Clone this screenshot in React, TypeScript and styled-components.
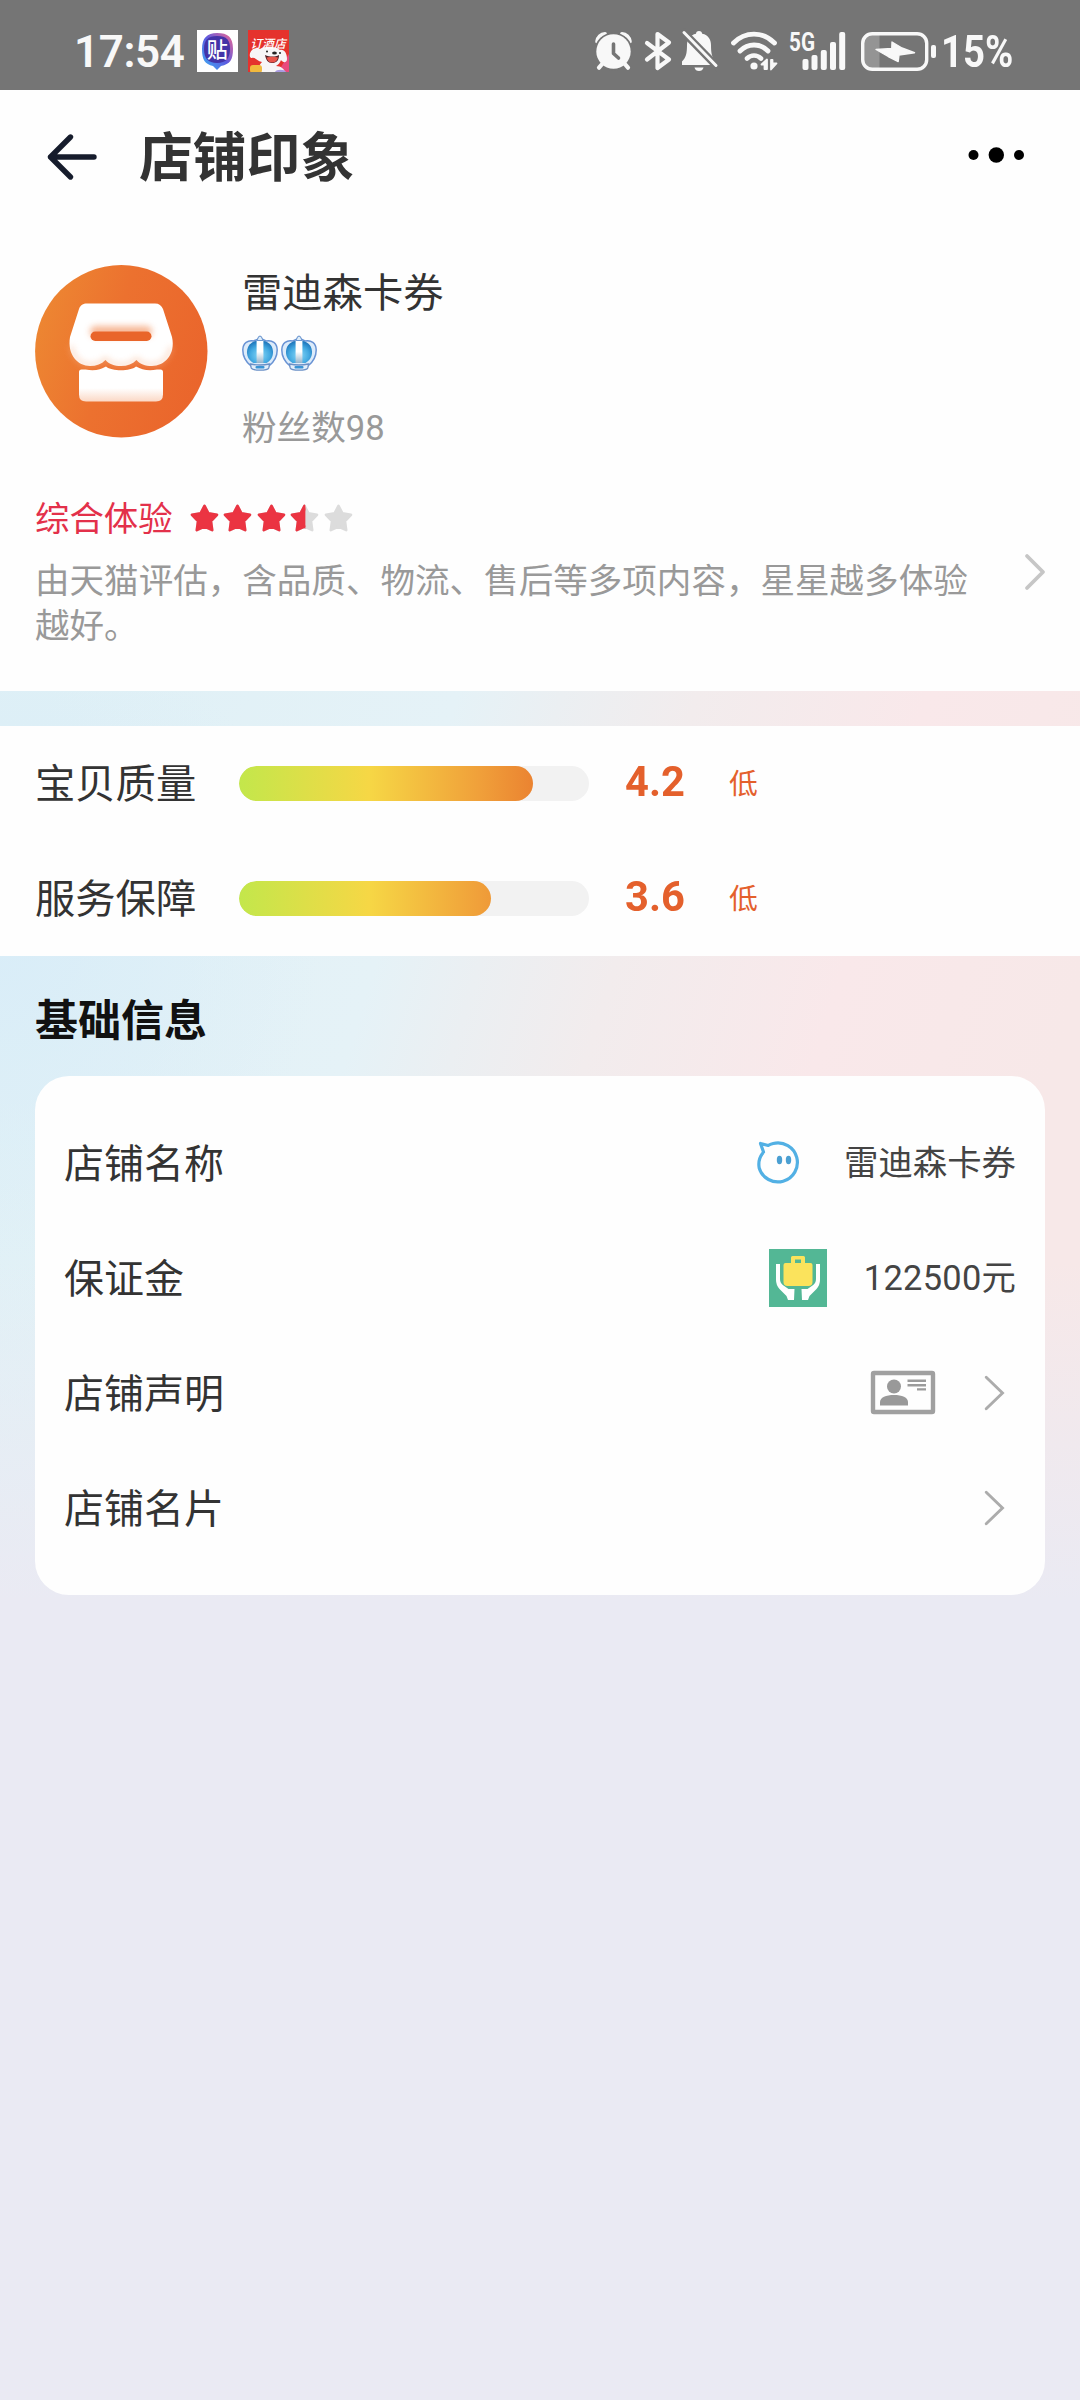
import React from "react";
import styled, { createGlobalStyle } from "styled-components";

const GlobalStyle = createGlobalStyle`
  * { box-sizing: border-box; }
  body {
    margin: 0;
    background: #e9e9f3;
    font-family: Roboto, "Noto Sans CJK SC", sans-serif;
    color: #333;
  }
  svg { display: block; flex: none; overflow: visible; }
`;

const Page = styled.div`
  width: 1080px;
  min-height: 2400px;
  display: flex;
  flex-direction: column;
  overflow: hidden;
  background:
    linear-gradient(180deg, rgba(234, 234, 243, 0) 1260px, #eaeaf3 1600px),
    radial-gradient(320px 320px at 0 940px, #d9edf8 0%, rgba(217, 237, 248, 0) 100%),
    linear-gradient(107deg, #dff0f6 250px, #e5f2f7 640px, #ebeff2 740px, #f2eced 870px, #f9e8ea 1090px, #f7e8e8 1320px);
`;

/* ---------- status bar ---------- */

const StatusBar = styled.div`
  height: 90px;
  padding: 12px 66px 0 74px;
  display: flex;
  align-items: center;
  background: #757575;
  color: #f8f8f8;
`;

const Clock = styled.div`
  width: 123px;
  padding-top: 1px;
  font-size: 44px;
  line-height: 50px;
  font-weight: 600;
  letter-spacing: -0.4px;
  white-space: nowrap;
`;

const AppBadges = styled.div`
  display: flex;
  gap: 10px;
`;

const StatusIcons = styled.div`
  margin-left: auto;
  display: flex;
  align-items: center;
`;

const IconSlot = styled.div<{ $after: number }>`
  margin-right: ${(p) => p.$after}px;
`;

const Percent = styled.div`
  width: 73px;
  margin-left: 4px;
  padding-top: 1px;
  font-size: 44px;
  line-height: 50px;
  font-weight: 700;
  white-space: nowrap;
  transform: scaleX(0.87);
  transform-origin: left center;
`;

/* ---------- title bar ---------- */

const TitleBar = styled.header`
  height: 134px;
  padding: 0 56px 0 47px;
  display: flex;
  align-items: center;
  background: #fefefe;
`;

const Title = styled.h1`
  margin: 0 auto 0 42px;
  padding-top: 4px;
  font-size: 53.8px;
  line-height: 64px;
  font-weight: 700;
  color: #333;
`;

const MoreButton = styled.div`
  padding-bottom: 4px;
`;

/* ---------- shop header ---------- */

const ShopPanel = styled.section`
  height: 467px;
  padding: 41px 35px 0;
  background: #fefefe;
`;

const ShopHead = styled.div`
  display: flex;
  gap: 34px;
`;

const ShopMeta = styled.div`
  display: flex;
  flex-direction: column;
`;

const ShopName = styled.div`
  height: 56px;
  padding-top: 1px;
  font-size: 40.3px;
  line-height: 56px;
`;

const Crowns = styled.div`
  display: flex;
  gap: 3px;
  margin-top: 14px;
`;

const Fans = styled.div`
  margin-top: 32px;
  font-size: 34.6px;
  line-height: 50px;
  color: #999;
`;

const RatingRow = styled.div`
  margin-top: 40px;
  height: 50px;
  display: flex;
  align-items: center;
  gap: 17px;
`;

const RatingLabel = styled.span`
  padding-top: 1px;
  font-size: 34.4px;
  line-height: 50px;
  color: #e3304a;
`;

const Stars = styled.div`
  display: flex;
  gap: 4.6px;
`;

const SummaryRow = styled.div`
  margin-top: 11px;
  display: flex;
  justify-content: space-between;
`;

const Summary = styled.p`
  margin: 0;
  padding-top: 5px;
  width: 950px;
  font-size: 34.56px;
  line-height: 45px;
  color: #999;
`;

/* ---------- score bars ---------- */

const ScorePanel = styled.section`
  margin-top: 35px;
  background: #fefefe;
`;

const ScoreRow = styled.div`
  height: 115px;
  padding-left: 35px;
  display: flex;
  align-items: center;
`;

const ScoreLabel = styled.div`
  width: 204px;
  padding-top: 3px;
  font-size: 40.3px;
  line-height: 56px;
`;

const Track = styled.div`
  width: 350px;
  height: 35px;
  border-radius: 18px;
  overflow: hidden;
  background: #f2f2f2;
`;

const Fill = styled.div`
  height: 35px;
  border-radius: 18px;
  background: linear-gradient(90deg, #c3e74b 0, #f6d745 130px, #f0a03a 240px, #ea8030 300px);
`;

const ScoreValue = styled.div`
  width: 104px;
  margin-left: 36px;
  padding-bottom: 5px;
  font-size: 43px;
  line-height: 50px;
  font-weight: 700;
  color: #e4602c;
  transform: scaleX(0.97);
  transform-origin: left center;
`;

const ScoreLevel = styled.div`
  padding-top: 1px;
  font-size: 28.8px;
  line-height: 40px;
  color: #e4602c;
`;

/* ---------- basic info ---------- */

const SectionTitle = styled.h2`
  margin: 0;
  height: 120px;
  padding: 35px 35px 0;
  font-size: 43px;
  line-height: 60px;
  font-weight: 700;
  color: #111;
`;

const Card = styled.section`
  margin: 0 35px;
  height: 519px;
  padding: 29px 29px 0;
  border-radius: 34px;
  background: #fefefe;
`;

const InfoRow = styled.div`
  height: 115.2px;
  display: flex;
  align-items: center;
`;

const InfoLabel = styled.div`
  margin-right: auto;
  padding-top: 4px;
  font-size: 40px;
  line-height: 56px;
`;

const InfoValue = styled.div<{ $gap: number }>`
  margin-left: ${(p) => p.$gap}px;
  font-size: 34.4px;
  line-height: 50px;
  color: #444;
`;

const Digits = styled.span`
  letter-spacing: 0.3px;
`;

const ArrowSlot = styled.div`
  width: 61px;
  margin-left: 20px;
  padding-right: 12px;
  display: flex;
  justify-content: flex-end;
`;

/* ---------- drawings ---------- */

const TiebaBadge = () => (
  <svg width="41" height="42" viewBox="0 0 41 42">
    <defs>
      <linearGradient id="tb" x1="0" y1="1" x2="1" y2="0">
        <stop offset="0" stopColor="#3ab4f5" />
        <stop offset=".5" stopColor="#5d5be0" />
        <stop offset="1" stopColor="#f2678f" />
      </linearGradient>
    </defs>
    <rect width="41" height="42" fill="#fff" />
    <path d="M20 3c11 0 16 4 16 16 0 11-3 15-12 17l-4 4-4-4C8 34 5 30 5 19 5 8 10 3 20 3z" fill="url(#tb)" />
    <path d="M20 6c10 0 13 4 13 13s-4 14-13 14S7 28 7 19 11 6 20 6z" fill="#4434a8" />
    <text x="20.3" y="27" fontSize="21" fontWeight="500" textAnchor="middle" fill="#fff">贴</text>
  </svg>
);

const HotelBadge = () => (
  <svg width="41" height="42" viewBox="0 0 41 42">
    <defs>
      <clipPath id="hb"><rect width="41" height="42" /></clipPath>
    </defs>
    <g clipPath="url(#hb)">
      <rect width="41" height="42" fill="#e5322d" />
      <path d="M30 42h11V24z" fill="#e94a7c" />
      <path d="M12 42c-2-4-1-7 2-10-5-1-7-5-10-4-3 0-3-5 0-8 2-2 5-2 8-1 4-3 16-3 20 1 4-1 7 3 7 9 0 4-4 4-6 1-1 3-3 5-5 6 5 0 8 3 9 6z" fill="#f7f5f6" />
      <path d="M17 25c5 2 10 2 14 0 0 6-3 8-7 8s-6-3-7-8z" fill="#4b1d24" />
      <path d="M18.500 27.500c4-1 8-1 11.500 0-1 4-3 5-6 5s-4.500-2-5.500-5z" fill="#e8544a" />
      <circle cx="19" cy="21.500" r="1" fill="#222" />
      <circle cx="32" cy="23" r="1" fill="#222" />
      <ellipse cx="26.500" cy="23" rx="2.400" ry="1.500" fill="#222" />
      <rect x="2" y="35" width="12" height="8" rx="3" fill="#f1b93d" />
      <path d="M27 42c1-3 10-3 11 0z" fill="#a89be0" />
      <text x="20" y="17.500" fontSize="11.800" fontWeight="500" fontStyle="italic" textAnchor="middle" fill="#fff">订酒店</text>
    </g>
  </svg>
);

const AlarmIcon = () => (
  <svg width="37" height="38" viewBox="0 0 37 38" fill="none" stroke="#f8f8f8">
    <path d="M2.200 9.500C2.800 5 6 2.200 10 2M34.800 9.500C34.200 5 31 2.200 27 2" strokeWidth="4" strokeLinecap="round" />
    <circle cx="18.500" cy="19.500" r="18" stroke="#757575" strokeWidth="2" />
    <path d="M8 31l-4 4.700M29 31l4 4.700" strokeWidth="4.200" strokeLinecap="round" />
    <circle cx="18.500" cy="19.500" r="17.200" fill="#f8f8f8" stroke="none" />
    <path d="M18.500 12v9.500l5 4.500" stroke="#757575" strokeWidth="3.600" strokeLinecap="round" strokeLinejoin="round" />
  </svg>
);

const BluetoothIcon = () => (
  <svg width="26" height="38" viewBox="0 0 26 38" fill="none" stroke="#f8f8f8" strokeWidth="4.200" strokeLinecap="round" strokeLinejoin="round">
    <path d="M2 11l22 16.500-11.500 8.500V2L24 10.500 2 27.500" />
  </svg>
);

const MutedBellIcon = () => (
  <svg width="36" height="40" viewBox="0 0 36 40">
    <path d="M17 0c2 0 3 1.200 3.200 2.800C26.500 4 29 9 29 14c0 9 1 12 4.500 16.500V34H0v-3.500c4-4 5-8 5-16.500 0-5.500 3.500-10 9-11.200C14 1.200 15 0 17 0z" fill="#f8f8f8" />
    <path d="M12.500 36.500h9c-.5 2.400-2.300 3.500-4.500 3.500s-4-1.100-4.500-3.500z" fill="#f8f8f8" />
    <path d="M0-.4l37 38" stroke="#757575" strokeWidth="7.600" />
    <path d="M2 1.500l32 33" stroke="#f8f8f8" strokeWidth="3" strokeLinecap="round" />
  </svg>
);

const WifiIcon = () => (
  <svg width="48" height="39" viewBox="0 0 48 39" fill="none" stroke="#f8f8f8" strokeLinecap="round">
    <path d="M2.500 11C14-.8 32-.8 43.500 11" strokeWidth="4.800" />
    <path d="M9 19c8-8 20-8 28 0" strokeWidth="4.800" />
    <path d="M16 26.500c4-4 10-4 14 0" strokeWidth="4.600" />
    <circle cx="23" cy="34" r="3.600" fill="#f8f8f8" stroke="none" />
    <path d="M36 27.500v9.500h-2.500v-4.500h-3zM40 37.500V28h1.500v3.500h4z" fill="#f8f8f8" strokeWidth="1.800" strokeLinejoin="round" />
  </svg>
);

const SignalIcon = () => (
  <svg width="57" height="39" viewBox="0 0 57 39" fill="#f8f8f8">
    <text x="0" y="19" fontSize="26" fontWeight="700" textLength="26" lengthAdjust="spacingAndGlyphs">5G</text>
    <rect x="13.500" y="27" width="6" height="11" rx="2" />
    <rect x="22.500" y="23" width="6" height="15" rx="2" />
    <rect x="31.800" y="18" width="6" height="20" rx="2" />
    <rect x="41" y="10" width="6" height="28" rx="2" />
    <rect x="50.200" y="0" width="6" height="38" rx="2" />
  </svg>
);

const BatteryIcon = () => (
  <svg width="76" height="39" viewBox="0 0 76 39">
    <path d="M10 3h8.500v33H10a7 7 0 0 1-7-7V10a7 7 0 0 1 7-7z" fill="#949494" />
    <rect x="1.700" y="1.700" width="64" height="35.600" rx="9.500" fill="none" stroke="#f8f8f8" strokeWidth="3.400" />
    <path d="M31 10l10 6 12.500 4.700-15.500 2.300-.8 6.500-10-5-12.200-7 15.800-1z" fill="#f8f8f8" stroke="#f8f8f8" strokeWidth="1.400" strokeLinejoin="round" />
    <rect x="70" y="13" width="5" height="13" rx="2" fill="#f8f8f8" />
  </svg>
);

const BackIcon = () => (
  <svg width="50" height="46" viewBox="0 0 50 46" fill="none" stroke="#161c2c" strokeWidth="5.400" strokeLinecap="round" strokeLinejoin="round">
    <path d="M23.500 3L3.500 23l20 20M3.500 23H47" />
  </svg>
);

const MoreIcon = () => (
  <svg width="56" height="16" viewBox="0 0 56 16" fill="#000">
    <circle cx="5.500" cy="8" r="5" />
    <circle cx="28.300" cy="8" r="7.700" />
    <circle cx="51" cy="8" r="5" />
  </svg>
);

const ShopAvatar = () => (
  <svg width="173" height="173" viewBox="35 77 173 173">
    <defs>
      <linearGradient id="av" x1="0" y1=".3" x2="1" y2=".6">
        <stop offset="0" stopColor="#ed8732" />
        <stop offset=".45" stopColor="#ec712f" />
        <stop offset="1" stopColor="#ea652c" />
      </linearGradient>
      <linearGradient id="base" x1="0" y1="0" x2="0" y2="1">
        <stop offset="0" stopColor="#fff" />
        <stop offset=".62" stopColor="#fff" />
        <stop offset="1" stopColor="#fbd8c5" />
      </linearGradient>
      <filter id="soft" x="-20%" y="-60%" width="140%" height="220%">
        <feGaussianBlur stdDeviation="3" />
      </filter>
    </defs>
    <circle cx="121.300" cy="163.300" r="86.200" fill="url(#av)" />
    <path d="M87 115.500h68c4 0 6.500 2 8 5.500l9 28c4 18-8 29-20 29-7 0-12-2-15.500-6-4 4-9 6-15.500 6s-12-2-15.500-6c-4 4-9 6-15.500 6-12 0-23-11-20-29l9-28c1.500-4 4-5.500 8-5.500z" fill="#fff" />
    <path d="M71 158c2 13 11 19 19 19 6 0 12-2 15.500-6 4 4 9 6 15.500 6s11.500-2 15.500-6c4 4 9 6 15.500 6 9 0 17-7 19-18" fill="none" stroke="#f6b792" strokeWidth="3" opacity=".65" filter="url(#soft)" />
    <rect x="90" y="138" width="62" height="11" rx="5.500" fill="#f5a67c" opacity=".8" filter="url(#soft)" />
    <rect x="90.500" y="143.500" width="61" height="9.500" rx="4.700" fill="#e9652a" />
    <path d="M81.500 181.500h4c9 2 15 0 20.500-3 6 5 24 5 30 0 6 3 12 5 21 3h3.500q2.500 0 2.500 2.500V206.500q0 7-7 7H86q-7 0-7-7v-22.500q0-2.500 2.500-2.500z" fill="url(#base)" />
  </svg>
);

const Crown = () => (
  <svg width="36" height="36" viewBox="0 0 36 36">
    <defs>
      <radialGradient id="cr" cx=".5" cy=".65" r=".62">
        <stop offset="0" stopColor="#86d6f6" />
        <stop offset=".6" stopColor="#45abe2" />
        <stop offset="1" stopColor="#1f78bd" />
      </radialGradient>
      <linearGradient id="crs" x1="0" y1="0" x2="0" y2="1">
        <stop offset="0" stopColor="#fff" />
        <stop offset=".5" stopColor="#fff" />
        <stop offset="1" stopColor="#94b4cc" />
      </linearGradient>
    </defs>
    <path d="M9 31C4 27 .8 21 .8 15 .8 8 6 4.500 12 6c2-1.300 4-2 6-2s4 .7 6 2c6-1.500 11.200 2 11.200 9 0 6-3.200 12-8.200 16z" fill="#dcebfa" stroke="#6993d4" strokeWidth="1.500" />
    <path d="M11.500 28C6.500 25 4.800 21 5 16.500 5.400 9.500 10.500 5.500 18 5.500s12.600 4 13 11c.2 4.500-1.500 8.500-6.500 11.500z" fill="url(#cr)" />
    <path d="M14.600 5.500h6.800v22.500h-6.800z" fill="url(#crs)" />
    <path d="M15 5.500c1-2.500 1-4 3-4.500 2 .5 2 2 3 4.500z" fill="#dfeefa" stroke="#7099d0" strokeWidth="1.100" />
    <path d="M8.500 29q9.500 2 19 0l-.7 4q-1 2.200-8.800 2.200T9.200 33z" fill="#e4effa" stroke="#6b90c6" strokeWidth="1.300" />
    <rect x="13.500" y="31" width="9" height="2.600" rx="1" fill="#3a93d4" />
  </svg>
);

const STAR = "M14.500 1.800l3.900 7.600 8.600 1.400-6 6.300 1.200 9.100-7.700-3.700-7.700 3.700L8 17.100l-6-6.300 8.600-1.400z";

const Star = ({ fill }: { fill: number }) => (
  <svg width="29" height="29" viewBox="0 0 29 29" strokeWidth="2.600" strokeLinejoin="round">
    <defs>
      <clipPath id={`star-${fill}`}>
        <rect x="-1" y="-1" width={1 + 29 * fill} height="31" />
      </clipPath>
    </defs>
    <path d={STAR} fill="#dcdcdc" stroke="#dcdcdc" />
    {fill > 0 && <path d={STAR} fill="#eb3442" stroke="#eb3442" clipPath={fill < 1 ? `url(#star-${fill})` : undefined} />}
  </svg>
);

const SummaryArrow = () => (
  <svg width="20" height="36" viewBox="0 0 20 36" fill="none" stroke="#c6c6c6" strokeWidth="3.800" strokeLinecap="round" strokeLinejoin="round">
    <path d="M2 2l16 16L2 34" />
  </svg>
);

const RowArrow = () => (
  <svg width="19" height="34" viewBox="0 0 19 34" fill="none" stroke="#acacac" strokeWidth="2.900" strokeLinecap="round">
    <path d="M1.200 1.200L17.500 17 1.200 32.800" />
  </svg>
);

const ChatIcon = () => (
  <svg width="43" height="44" viewBox="0 0 43 44" fill="none" stroke="#52b0e4" strokeWidth="3.200">
    <path d="M5.500 12.500C2 17 1.300 22 2.200 27a19.500 19.500 0 1 0 14-24.500c-2 .5-3.500 1-5 2L3.500 2.500l3 8.500" strokeLinecap="round" strokeLinejoin="round" />
    <ellipse cx="22.500" cy="19" rx="2.700" ry="4.200" fill="#4a9fd2" stroke="none" />
    <ellipse cx="31.500" cy="19" rx="2.700" ry="4.200" fill="#4a9fd2" stroke="none" />
  </svg>
);

const DepositIcon = () => (
  <svg width="58" height="58" viewBox="0 0 58 58">
    <rect width="58" height="58" fill="#53b795" />
    <path d="M7 15h4v15q0 4 3.500 6.500l5 3.500h6l-.5 11h-6l-1.500-4-7-7Q7 36 7 31zM51 15h-4v15q0 4-3.500 6.500l-5 3.500h-6l.5 11h6l1.500-4 7-7q3.500-4 3.500-9z" fill="#fff" />
    <path d="M22 14V8.500Q22 7 23.500 7h11Q36 7 36 8.500V14h5.500q2 0 2 2v17q0 4-4 4h-21q-4 0-4-4V16q0-2 2-2zm4 0h6v-3.500h-6z" fill="#fbe35c" fillRule="evenodd" />
  </svg>
);

const IdCardIcon = () => (
  <svg width="64" height="43" viewBox="0 0 64 43">
    <rect x="2" y="2" width="60" height="39" rx="1" fill="none" stroke="#a0a0a0" strokeWidth="4.400" />
    <circle cx="23" cy="15.500" r="7" fill="#999" />
    <path d="M9 34.500V31c0-4.500 6-7 14-7s14 2.500 14 7v3.500z" fill="#999" />
    <path d="M36.500 9.800H55M36.500 14.200H55M46 18.400h9" stroke="#9b9b9b" strokeWidth="2.400" />
  </svg>
);

/* ---------- data ---------- */

const stars = [1, 1, 1, 0.53, 0];

const scores = [
  { label: "宝贝质量", value: 4.2, level: "低" },
  { label: "服务保障", value: 3.6, level: "低" },
];

export default function App() {
  return (
    <>
      <GlobalStyle />
      <Page>
        <StatusBar>
          <Clock>17:54</Clock>
          <AppBadges>
            <TiebaBadge />
            <HotelBadge />
          </AppBadges>
          <StatusIcons>
            <IconSlot $after={13}><AlarmIcon /></IconSlot>
            <IconSlot $after={11}><BluetoothIcon /></IconSlot>
            <IconSlot $after={13}><MutedBellIcon /></IconSlot>
            <IconSlot $after={10}><WifiIcon /></IconSlot>
            <IconSlot $after={15}><SignalIcon /></IconSlot>
            <IconSlot $after={0}><BatteryIcon /></IconSlot>
            <Percent>15%</Percent>
          </StatusIcons>
        </StatusBar>

        <TitleBar>
          <BackIcon />
          <Title>店铺印象</Title>
          <MoreButton>
            <MoreIcon />
          </MoreButton>
        </TitleBar>

        <ShopPanel>
          <ShopHead>
            <ShopAvatar />
            <ShopMeta>
              <ShopName>雷迪森卡券</ShopName>
              <Crowns>
                <Crown />
                <Crown />
              </Crowns>
              <Fans>粉丝数98</Fans>
            </ShopMeta>
          </ShopHead>
          <RatingRow>
            <RatingLabel>综合体验</RatingLabel>
            <Stars>
              {stars.map((s, i) => (
                <Star key={i} fill={s} />
              ))}
            </Stars>
          </RatingRow>
          <SummaryRow>
            <Summary>由天猫评估，含品质、物流、售后等多项内容，星星越多体验越好。</Summary>
            <SummaryArrow />
          </SummaryRow>
        </ShopPanel>

        <ScorePanel>
          {scores.map((s) => (
            <ScoreRow key={s.label}>
              <ScoreLabel>{s.label}</ScoreLabel>
              <Track>
                <Fill style={{ width: `${(s.value / 5) * 100}%` }} />
              </Track>
              <ScoreValue>{s.value.toFixed(1)}</ScoreValue>
              <ScoreLevel>{s.level}</ScoreLevel>
            </ScoreRow>
          ))}
        </ScorePanel>

        <SectionTitle>基础信息</SectionTitle>
        <Card>
          <InfoRow>
            <InfoLabel>店铺名称</InfoLabel>
            <ChatIcon />
            <InfoValue $gap={44}>雷迪森卡券</InfoValue>
          </InfoRow>
          <InfoRow>
            <InfoLabel>保证金</InfoLabel>
            <DepositIcon />
            <InfoValue $gap={37}><Digits>122500</Digits>元</InfoValue>
          </InfoRow>
          <InfoRow>
            <InfoLabel>店铺声明</InfoLabel>
            <IdCardIcon />
            <ArrowSlot>
              <RowArrow />
            </ArrowSlot>
          </InfoRow>
          <InfoRow>
            <InfoLabel>店铺名片</InfoLabel>
            <ArrowSlot>
              <RowArrow />
            </ArrowSlot>
          </InfoRow>
        </Card>
      </Page>
    </>
  );
}
